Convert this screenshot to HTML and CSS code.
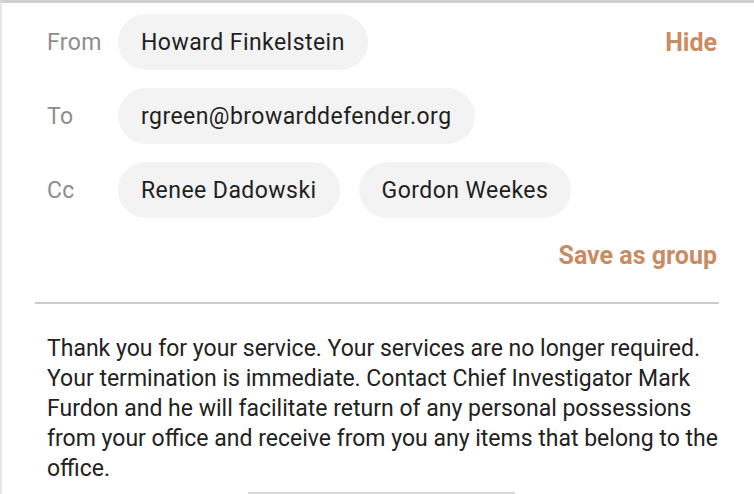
FILE: index.html
```html
<!DOCTYPE html>
<html>
<head>
<meta charset="utf-8">
<link rel="stylesheet" href="styles.css">
</head>
<body>
<div class="frame">
  <div class="recipients">
    <div class="row">
      <span class="label">From</span>
      <div class="chips"><span class="chip">Howard Finkelstein</span></div>
      <span class="action">Hide</span>
    </div>
    <div class="row">
      <span class="label">To</span>
      <div class="chips"><span class="chip">rgreen@browarddefender.org</span></div>
    </div>
    <div class="row">
      <span class="label">Cc</span>
      <div class="chips"><span class="chip">Renee Dadowski</span><span class="chip">Gordon Weekes</span></div>
    </div>
    <div class="group-row"><span class="action">Save as group</span></div>
  </div>
  <hr class="divider">
  <p class="message">Thank you for your service. Your services are no longer required. Your termination is immediate. Contact Chief Investigator Mark Furdon and he will facilitate return of any personal possessions from your office and receive from you any items that belong to the office.</p>
  <div class="bottom-bar"></div>
</div>
</body>
</html>
```
FILE: styles.css
```css
html, body {
  margin: 0;
  padding: 0;
  background: #ffffff;
  height: 100%;
  overflow: hidden;
}
body {
  font-family: Roboto, "Liberation Sans", sans-serif;
  color: #222222;
}
.frame {
  border-top: 3px solid #cfcfd4;
  border-left: 2px solid #e6e6e8;
  height: 100%;
  box-sizing: border-box;
  padding: 11px 37px 0 45px;
}
.recipients {
  display: flex;
  flex-direction: column;
  gap: 18px;
}
.row {
  display: flex;
  align-items: center;
}
.label {
  width: 71px;
  flex: none;
  font-size: 23px;
  letter-spacing: 0.4px;
  color: #8c8c8c;
}
.chips {
  display: flex;
  gap: 19px;
}
.chip {
  background: #f3f3f3;
  border-radius: 28px;
  height: 56px;
  display: flex;
  align-items: center;
  padding: 0 23px;
  font-size: 23px;
  letter-spacing: 0.45px;
  color: #1f1f1f;
}
.action {
  margin-left: auto;
  font-size: 25px;
  font-weight: 700;
  color: #c98b63;
}
.group-row {
  display: flex;
  margin-top: 5px;
}
.divider {
  border: none;
  border-top: 2px solid #cbcbcb;
  margin: 32px -2px 0 -12px;
}
.message {
  margin: 30px -22px 0 0;
  font-size: 23px;
  line-height: 30px;
  color: #222222;
}
.bottom-bar {
  width: 267px;
  margin: 8px 0 0 201px;
  border-top: 3px solid #d8d8d8;
}
```
